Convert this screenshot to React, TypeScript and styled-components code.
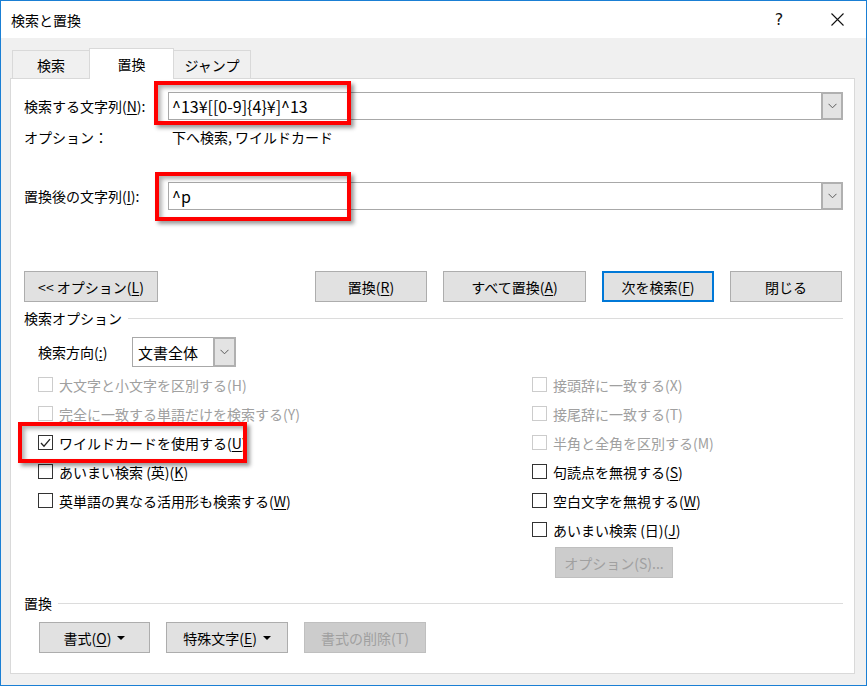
import React from 'react';
import styled, { createGlobalStyle, css } from 'styled-components';

const GlobalStyle = createGlobalStyle`
  html, body {
    margin: 0;
    padding: 0;
    background: #ffffff;
  }
  body {
    font-family: "Noto Sans CJK JP", "Noto Sans", sans-serif;
  }
  u {
    text-underline-offset: 2px;
  }
`;

const Window = styled.div`
  width: 867px;
  height: 686px;
  box-sizing: border-box;
  border: 1px solid #1a7fd4;
  background: #f0f0f0;
  display: flex;
  flex-direction: column;
  font-size: 14px;
  color: #000;
`;

const TitleBar = styled.div`
  height: 37px;
  background: #ffffff;
  display: flex;
  align-items: center;
  padding-left: 10px;
  span {
    flex: 1;
    font-size: 14px;
  }
`;

const CaptionButton = styled.div`
  width: 58px;
  height: 37px;
  display: flex;
  align-items: center;
  justify-content: center;
  font-family: "DejaVu Sans", sans-serif;
  font-size: 16px;
  color: #111;
`;

const Body = styled.div`
  flex: 1;
  display: flex;
  flex-direction: column;
  padding: 10px 11px 11px 9px;
`;

const TabRow = styled.div`
  display: flex;
  align-items: flex-end;
  padding-left: 2px;
  height: 31px;
  margin-bottom: -1px;
`;

const Tab = styled.div<{ $active?: boolean; $width: number }>`
  width: ${(p) => p.$width}px;
  box-sizing: border-box;
  border: 1px solid #d9d9d9;
  border-bottom: none;
  display: flex;
  align-items: center;
  justify-content: center;
  margin-left: -1px;
  ${(p) =>
    p.$active
      ? css`
          height: 31px;
          background: #ffffff;
          position: relative;
          z-index: 1;
        `
      : css`
          height: 28px;
          margin-bottom: 1px;
          background: #f0f0f0;
        `}
  &:first-child {
    margin-left: 0;
  }
`;

const Panel = styled.div`
  flex: 1;
  position: relative;
  background: #ffffff;
  border: 1px solid #d9d9d9;
  padding: 13px 11px 0 13px;
  display: flex;
  flex-direction: column;
`;

const FieldRow = styled.div<{ $top: number }>`
  display: flex;
  align-items: center;
  height: 28px;
  margin-top: ${(p) => p.$top}px;
`;

const FieldLabel = styled.div`
  width: 144px;
  flex-shrink: 0;
  white-space: nowrap;
`;

const Combo = styled.div`
  flex: 1;
  height: 28px;
  box-sizing: border-box;
  border: 1px solid #a8a8a8;
  display: flex;
  background: #fff;
`;

const ComboValue = styled.div`
  flex: 1;
  display: flex;
  align-items: center;
  padding-left: 3px;
  font-size: 16px;
  white-space: nowrap;
`;

const DropButton = styled.div<{ $width: number }>`
  width: ${(p) => p.$width}px;
  margin: -1px -1px -1px 0;
  box-sizing: border-box;
  border: 2px solid #b0b0b0;
  background: #e3e3e3;
  display: flex;
  align-items: center;
  justify-content: center;
`;

const InfoRow = styled.div`
  display: flex;
  align-items: center;
  height: 18px;
  margin-top: 8px;
`;

const InfoLabel = styled.div`
  width: 148px;
`;

const ButtonRow = styled.div<{ $top: number; $indent?: number }>`
  display: flex;
  align-items: center;
  gap: 16px;
  margin-top: ${(p) => p.$top}px;
  padding-left: ${(p) => p.$indent || 0}px;
`;

const Spacer = styled.div`
  flex: 1;
`;

const Button = styled.div<{ $width: number; $default?: boolean; $disabled?: boolean }>`
  width: ${(p) => p.$width}px;
  height: 31px;
  box-sizing: border-box;
  display: flex;
  align-items: center;
  justify-content: center;
  gap: 6px;
  white-space: nowrap;
  background: #e1e1e1;
  border: 1px solid #adadad;
  ${(p) =>
    p.$default &&
    css`
      border: 2px solid #0078d7;
    `}
  ${(p) =>
    p.$disabled &&
    css`
      background: #cccccc;
      border-color: #bfbfbf;
      color: #a0a0a0;
    `}
`;

const Caret = styled.span`
  width: 0;
  height: 0;
  border-left: 4px solid transparent;
  border-right: 4px solid transparent;
  border-top: 4px solid #000;
`;

const GroupHeader = styled.div<{ $top: number }>`
  display: flex;
  align-items: center;
  gap: 6px;
  height: 18px;
  margin-top: ${(p) => p.$top}px;
  &::after {
    content: '';
    flex: 1;
    height: 1px;
    background: #dcdcdc;
  }
`;

const DirectionRow = styled.div`
  display: flex;
  align-items: center;
  height: 30px;
  margin-top: 10px;
  padding-left: 14px;
`;

const DirectionLabel = styled.div`
  width: 94px;
`;

const Select = styled.div`
  width: 104px;
  height: 30px;
  box-sizing: border-box;
  border: 1px solid #a8a8a8;
  display: flex;
  background: #fff;
  span {
    flex: 1;
    display: flex;
    align-items: center;
    padding-left: 5px;
    font-size: 15px;
  }
`;

const OptionGrid = styled.div`
  display: grid;
  grid-template-columns: 494px 1fr;
  margin-top: 3px;
  padding-left: 14px;
`;

const Column = styled.div`
  display: flex;
  flex-direction: column;
`;

const CheckRow = styled.div<{ $disabled?: boolean }>`
  height: 29px;
  display: flex;
  align-items: center;
  gap: 6px;
  white-space: nowrap;
  color: ${(p) => (p.$disabled ? '#a0a0a0' : '#000')};
`;

const Box = styled.div<{ $disabled?: boolean }>`
  width: 15px;
  height: 15px;
  box-sizing: border-box;
  border: 1px solid ${(p) => (p.$disabled ? '#cccccc' : '#333333')};
  background: #fff;
  display: flex;
  align-items: center;
  justify-content: center;
`;

const SubOptionButton = styled(Button)`
  margin-top: 3px;
  margin-left: 23px;
`;

const Highlight = styled.div<{ $l: number; $t: number; $w: number; $h: number }>`
  position: absolute;
  left: ${(p) => p.$l}px;
  top: ${(p) => p.$t}px;
  width: ${(p) => p.$w}px;
  height: ${(p) => p.$h}px;
  box-sizing: border-box;
  border: 4px solid #ff0000;
  box-shadow: 3px 3px 4px rgba(0, 0, 0, 0.4), inset 3px 3px 4px rgba(0, 0, 0, 0.3);
  pointer-events: none;
  z-index: 2;
`;

const Chevron = () => (
  <svg width="9" height="6" viewBox="0 0 9 6">
    <path d="M0.5 0.8 L4.5 4.8 L8.5 0.8" fill="none" stroke="#5a5a5a" strokeWidth="1" />
  </svg>
);

const Check = () => (
  <svg width="11" height="10" viewBox="0 0 11 10">
    <path d="M1 5 L4 8.2 L10 1.2" fill="none" stroke="#222" strokeWidth="1.3" />
  </svg>
);

type Opt = { text: string; key?: string; disabled?: boolean; checked?: boolean };

const leftOptions: Opt[] = [
  { text: '大文字と小文字を区別する(H)', disabled: true },
  { text: '完全に一致する単語だけを検索する(Y)', disabled: true },
  { text: 'ワイルドカードを使用する(', key: 'U', checked: true },
  { text: 'あいまい検索 (英)(', key: 'K' },
  { text: '英単語の異なる活用形も検索する(', key: 'W' },
];

const rightOptions: Opt[] = [
  { text: '接頭辞に一致する(X)', disabled: true },
  { text: '接尾辞に一致する(T)', disabled: true },
  { text: '半角と全角を区別する(M)', disabled: true },
  { text: '句読点を無視する(', key: 'S' },
  { text: '空白文字を無視する(', key: 'W' },
  { text: 'あいまい検索 (日)(', key: 'J' },
];

const OptionItem = ({ opt }: { opt: Opt }) => (
  <CheckRow $disabled={opt.disabled}>
    <Box $disabled={opt.disabled}>{opt.checked && <Check />}</Box>
    <span>
      {opt.text}
      {opt.key && (
        <>
          <u>{opt.key}</u>)
        </>
      )}
    </span>
  </CheckRow>
);

const App = () => {
  return (
    <Window>
      <GlobalStyle />
      <TitleBar>
        <span>検索と置換</span>
        <CaptionButton>?</CaptionButton>
        <CaptionButton>
          <svg width="13" height="13" viewBox="0 0 13 13">
            <path d="M0.5 0.5 L12.5 12.5 M12.5 0.5 L0.5 12.5" stroke="#111" strokeWidth="1.1" />
          </svg>
        </CaptionButton>
      </TitleBar>
      <Body>
        <TabRow>
          <Tab $width={78}>検索</Tab>
          <Tab $width={85} $active>
            置換
          </Tab>
          <Tab $width={78}>ジャンプ</Tab>
        </TabRow>
        <Panel>
          <FieldRow $top={0}>
            <FieldLabel>
              検索する文字列(<u>N</u>):
            </FieldLabel>
            <Combo>
              <ComboValue>^13¥[[0-9]{'{'}4{'}'}¥]^13</ComboValue>
              <DropButton $width={22}>
                <Chevron />
              </DropButton>
            </Combo>
          </FieldRow>
          <InfoRow>
            <InfoLabel>オプション：</InfoLabel>
            <span>下へ検索, ワイルドカード</span>
          </InfoRow>
          <FieldRow $top={36}>
            <FieldLabel>
              置換後の文字列(<u>I</u>):
            </FieldLabel>
            <Combo>
              <ComboValue>^p</ComboValue>
              <DropButton $width={22}>
                <Chevron />
              </DropButton>
            </Combo>
          </FieldRow>

          <ButtonRow $top={61}>
            <Button $width={134}>
              <span>
                &lt;&lt; オプション(<u>L</u>)
              </span>
            </Button>
            <Spacer />
            <Button $width={112}>
              <span>
                置換(<u>R</u>)
              </span>
            </Button>
            <Button $width={143}>
              <span>
                すべて置換(<u>A</u>)
              </span>
            </Button>
            <Button $width={112} $default>
              <span>
                次を検索(<u>F</u>)
              </span>
            </Button>
            <Button $width={112} style={{ marginRight: 1 }}>
              閉じる
            </Button>
          </ButtonRow>

          <GroupHeader $top={7}>検索オプション</GroupHeader>
          <DirectionRow>
            <DirectionLabel>
              検索方向(<u>:</u>)
            </DirectionLabel>
            <Select>
              <span>文書全体</span>
              <DropButton $width={23}>
                <Chevron />
              </DropButton>
            </Select>
          </DirectionRow>

          <OptionGrid>
            <Column>
              {leftOptions.map((o) => (
                <OptionItem key={o.text} opt={o} />
              ))}
            </Column>
            <Column>
              {rightOptions.map((o) => (
                <OptionItem key={o.text} opt={o} />
              ))}
              <SubOptionButton $width={118} $disabled>
                オプション(S)...
              </SubOptionButton>
            </Column>
          </OptionGrid>

          <GroupHeader $top={16}>置換</GroupHeader>
          <ButtonRow $top={10} $indent={15}>
            <Button $width={111}>
              <span>
                書式(<u>O</u>)
              </span>
              <Caret />
            </Button>
            <Button $width={122}>
              <span>
                特殊文字(<u>E</u>)
              </span>
              <Caret />
            </Button>
            <Button $width={122} $disabled>
              書式の削除(T)
            </Button>
          </ButtonRow>

          <Highlight $l={143} $t={2} $w={197} $h={44} />
          <Highlight $l={144} $t={93} $w={196} $h={49} />
          <Highlight $l={7} $t={343} $w={229} $h={41} />
        </Panel>
      </Body>
    </Window>
  );
};

export default App;
